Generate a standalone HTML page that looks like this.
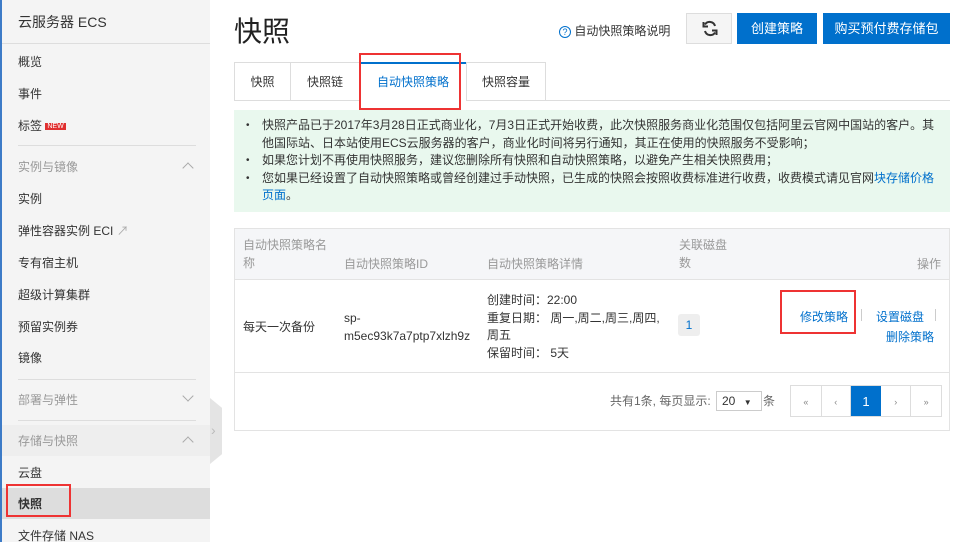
<!DOCTYPE html>
<html><head><meta charset="utf-8"><style>
*{margin:0;padding:0;box-sizing:border-box}
body{width:962px;height:542px;overflow:hidden;background:#fff;font-family:"Liberation Sans","Noto Sans CJK SC",sans-serif;font-size:12px;color:#333;position:relative}
.abs{position:absolute}
#side{left:0;top:0;width:210px;height:542px;background:#f4f4f4;border-left:2px solid #3d7bc7}
.si{position:absolute;left:16px;font-size:12px;color:#333}
.sec{color:#999}
.hr{position:absolute;left:16px;width:178px;height:1px;background:#ddd}
.chev{position:absolute;left:182px;width:8px;height:8px;border-left:1.5px solid #aaa;border-top:1.5px solid #aaa}
.btn{position:absolute;top:13px;height:31px;background:#0070cc;color:#fff;font-size:13px;text-align:center;line-height:31px}
.tab{position:absolute;top:62px;height:38px;line-height:38px;text-align:center;font-size:12px;color:#333;border:1px solid #ddd;border-bottom:none;background:#fff}
.red{position:absolute;border:2px solid #e33}
.link{color:#0070cc}
</style></head><body>
<div id="side" class="abs">
<div class="si" style="top:12px;font-size:14px;color:#333">云服务器 ECS</div>
<div class="abs" style="left:0;top:43px;width:208px;height:1px;background:#ddd"></div>
<div class="si" style="top:53px">概览</div>
<div class="si" style="top:85px">事件</div>
<div class="si" style="top:117px">标签 <span style="background:#e02f2f;color:#fff;font-size:7px;padding:0 2px;vertical-align:2px">NEW</span></div>
<div class="hr" style="top:145px"></div>
<div class="si sec" style="top:158px">实例与镜像</div><div class="chev" style="top:164px;transform:rotate(45deg)"></div>
<div class="si" style="top:190px">实例</div>
<div class="si" style="top:222px">弹性容器实例 ECI <span style="color:#aaa">↗</span></div>
<div class="si" style="top:254px">专有宿主机</div>
<div class="si" style="top:286px">超级计算集群</div>
<div class="si" style="top:318px">预留实例券</div>
<div class="si" style="top:349px">镜像</div>
<div class="hr" style="top:379px"></div>
<div class="si sec" style="top:391px">部署与弹性</div><div class="chev" style="top:392px;transform:rotate(225deg)"></div>
<div class="hr" style="top:420px"></div>
<div class="abs" style="left:0;top:425px;width:208px;height:31px;background:#eee"></div>
<div class="si sec" style="top:432px">存储与快照</div><div class="chev" style="top:438px;transform:rotate(45deg)"></div>
<div class="si" style="top:464px">云盘</div>
<div class="abs" style="left:0;top:488px;width:208px;height:31px;background:#ddd"></div>
<div class="si" style="top:495px;font-weight:bold">快照</div>
<div class="si" style="top:527px">文件存储 NAS</div>
</div>
<div class="abs" style="left:210px;top:398px;width:12px;height:66px;background:#e4e4e4;clip-path:polygon(0 0,100% 15%,100% 85%,0 100%)"></div>
<div class="abs" style="left:211px;top:422px;color:#bbb;font-size:14px">›</div>
<div class="red" style="left:6px;top:484px;width:65px;height:33px"></div>

<div class="abs" style="left:234px;top:10px;font-size:28px;color:#222">快照</div>
<div class="abs" style="left:559px;top:22px;font-size:12px;color:#333"><span style="display:inline-block;width:12px;height:12px;border:1px solid #0070cc;border-radius:50%;color:#0070cc;font-size:9px;text-align:center;line-height:10px">?</span> 自动快照策略说明</div>
<div class="abs" style="left:686px;top:13px;width:46px;height:31px;background:#f5f5f5;border:1px solid #ddd"><svg width="46" height="29" viewBox="0 0 46 29"><path d="M28 12a5.5 5.5 0 0 0-10-1.5M18 17a5.5 5.5 0 0 0 10 1.5" stroke="#333" stroke-width="2" fill="none"/><path d="M16.5 8v4.5H21M29.5 21v-4.5H25" stroke="#333" stroke-width="2" fill="none"/></svg></div>
<div class="btn" style="left:737px;width:80px">创建策略</div>
<div class="btn" style="left:823px;width:127px">购买预付费存储包</div>

<div class="abs" style="left:234px;top:100px;width:716px;height:1px;background:#ddd"></div>
<div class="tab" style="left:234px;width:57px">快照</div>
<div class="tab" style="left:290px;width:70px">快照链</div>
<div class="tab" style="left:359px;width:108px;color:#0070cc;border-top:2px solid #0070cc;height:39px;line-height:36px">自动快照策略</div>
<div class="tab" style="left:466px;width:80px">快照容量</div>
<div class="red" style="left:359px;top:53px;width:102px;height:57px"></div>

<div class="abs" style="left:234px;top:110px;width:716px;height:102px;background:#e9f8ee;padding:7px 12px 0 28px;font-size:12px;line-height:17.5px;color:#333">
<div>快照产品已于2017年3月28日正式商业化，7月3日正式开始收费，此次快照服务商业化范围仅包括阿里云官网中国站的客户。其他国际站、日本站使用ECS云服务器的客户，商业化时间将另行通知，其正在使用的快照服务不受影响；</div>
<div>如果您计划不再使用快照服务，建议您删除所有快照和自动快照策略，以避免产生相关快照费用；</div>
<div>您如果已经设置了自动快照策略或曾经创建过手动快照，已生成的快照会按照收费标准进行收费，收费模式请见官网<span class="link">块存储价格页面</span>。</div>
<div class="abs" style="left:12px;top:7px;line-height:17.5px;font-size:10px">•<br><br>•<br>•</div>
</div>

<div class="abs" style="left:234px;top:228px;width:716px;height:203px;border:1px solid #e3e3e3"></div>
<div class="abs" style="left:235px;top:229px;width:714px;height:51px;background:#f5f6f8;border-bottom:1px solid #e3e3e3"></div>
<div class="abs" style="left:243px;top:237px;color:#999;line-height:17.5px">自动快照策略名<br>称</div>
<div class="abs" style="left:344px;top:255px;color:#999">自动快照策略ID</div>
<div class="abs" style="left:487px;top:255px;color:#999">自动快照策略详情</div>
<div class="abs" style="left:679px;top:237px;color:#999;line-height:17.5px">关联磁盘<br>数</div>
<div class="abs" style="left:917px;top:255px;color:#999">操作</div>
<div class="abs" style="left:243px;top:318px">每天一次备份</div>
<div class="abs" style="left:344px;top:310px;line-height:17.5px">sp-<br>m5ec93k7a7ptp7xlzh9z</div>
<div class="abs" style="left:487px;top:292px;line-height:17.5px">创建时间：22:00<br>重复日期：&nbsp;周一,周二,周三,周四,<br>周五<br>保留时间：&nbsp;5天</div>
<div class="abs" style="left:678px;top:314px;width:22px;height:22px;background:#eee;border-radius:3px;text-align:center;line-height:22px;color:#0070cc">1</div>
<div class="abs link" style="left:800px;top:308px">修改策略</div>
<div class="abs" style="left:861px;top:309px;width:1px;height:12px;background:#ccc"></div>
<div class="abs link" style="left:876px;top:308px">设置磁盘</div>
<div class="abs" style="left:935px;top:309px;width:1px;height:12px;background:#ccc"></div>
<div class="abs link" style="left:886px;top:328px">删除策略</div>
<div class="red" style="left:780px;top:290px;width:76px;height:44px"></div>
<div class="abs" style="left:235px;top:372px;width:714px;height:1px;background:#e3e3e3"></div>
<div class="abs" style="left:610px;top:392px;color:#666">共有1条, 每页显示:</div>
<div class="abs" style="left:716px;top:391px;width:46px;height:20px;border:1px solid #ccc;padding-left:5px;line-height:18px">20 <span style="font-size:8px;margin-left:5px">▼</span></div>
<div class="abs" style="left:763px;top:392px;color:#666">条</div>
<div class="abs" style="left:790px;top:385px;width:152px;height:32px;border:1px solid #ddd;display:flex;color:#888;font-size:9px">
<div style="width:31px;border-right:1px solid #ddd;text-align:center;line-height:32px">«</div>
<div style="width:29px;border-right:1px solid #ddd;text-align:center;line-height:32px">‹</div>
<div style="width:31px;background:#0070cc;color:#fff;font-size:13px;text-align:center;line-height:31px">1</div>
<div style="width:30px;border-right:1px solid #ddd;text-align:center;line-height:32px">›</div>
<div style="width:30px;text-align:center;line-height:32px">»</div>
</div>
</body></html>
